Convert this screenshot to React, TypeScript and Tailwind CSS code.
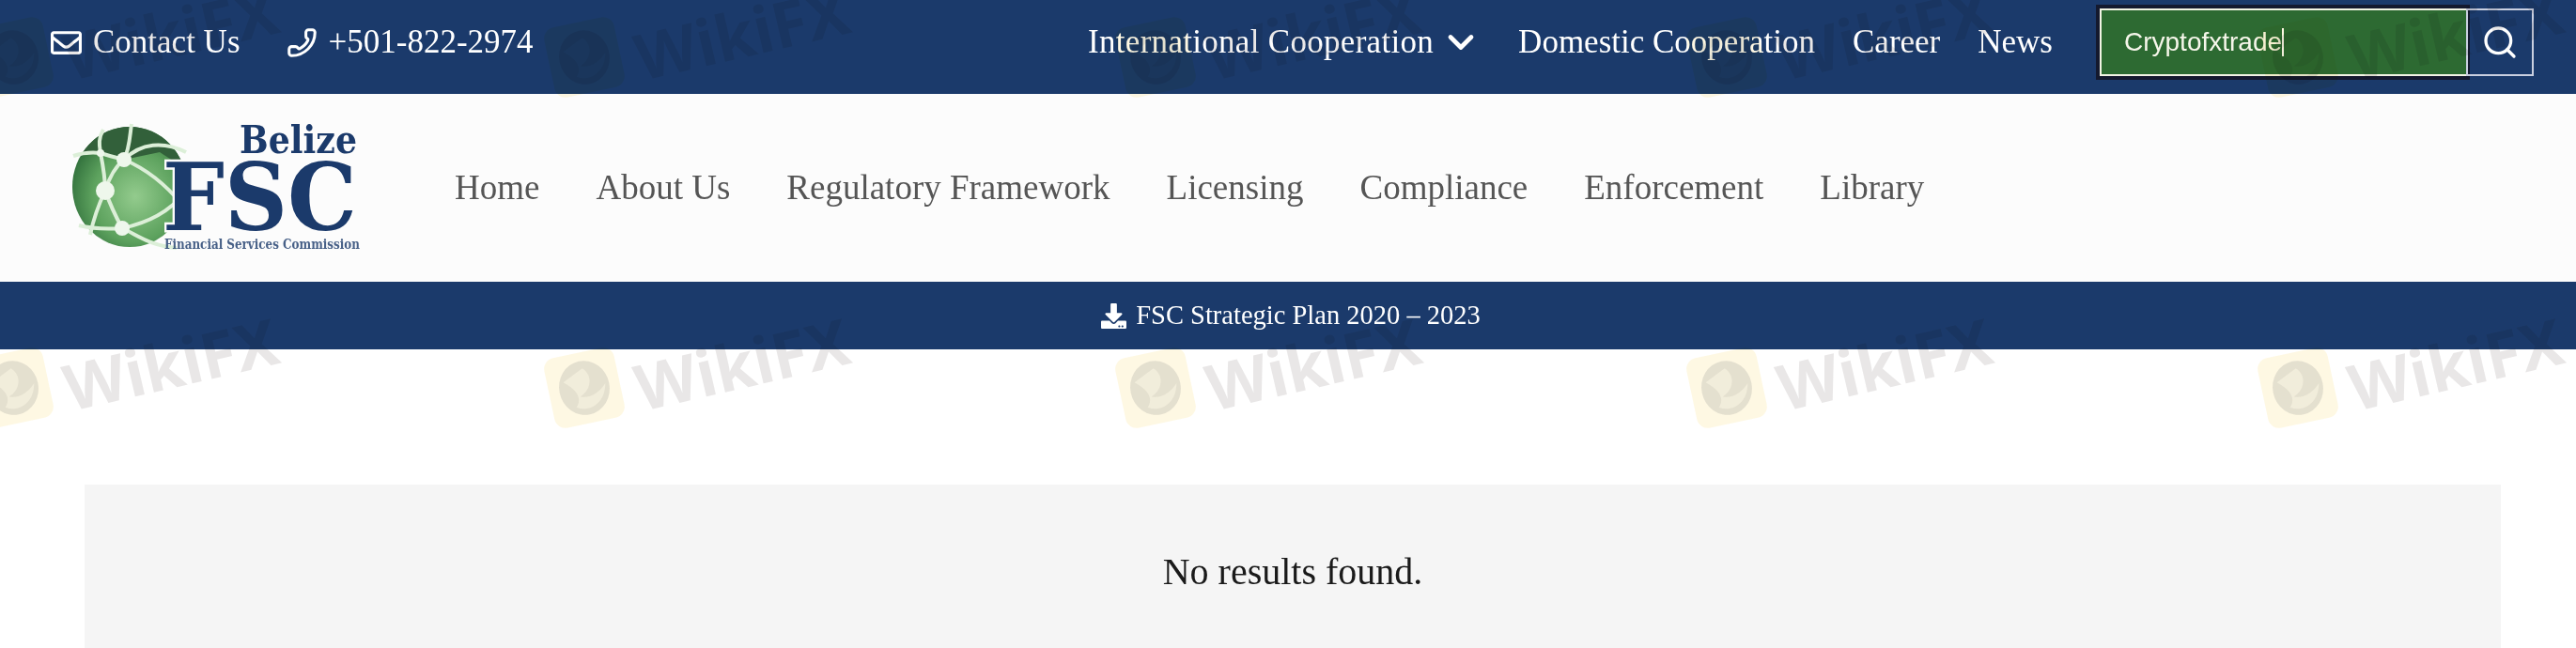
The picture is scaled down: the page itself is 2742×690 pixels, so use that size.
import { ChevronDown, Phone, Search } from "lucide-react";
import { FaDownload, FaRegEnvelope } from "react-icons/fa";

const mainNav = ["Home", "About Us", "Regulatory Framework", "Licensing", "Compliance", "Enforcement", "Library"];

const marks = [23, 375].flatMap((top) =>
  [-24, 584, 1192, 1800, 2408].map((left) => ({ top, left }))
);

const Logo = () => (
  <svg width="320" height="144" viewBox="0 0 320 144" className="block">
    <defs>
      <radialGradient id="globe" cx="0.55" cy="0.58" r="0.62">
        <stop offset="0" stopColor="#93cb8d" />
        <stop offset="0.6" stopColor="#5da25e" />
        <stop offset="1" stopColor="#2c6a38" />
      </radialGradient>
      <clipPath id="ball">
        <ellipse cx="68" cy="71" rx="61" ry="64" />
      </clipPath>
    </defs>
    <ellipse cx="68" cy="71" rx="61" ry="64" fill="url(#globe)" />
    <path d="M0 40 L37 35 L62 42 L100 34 L140 60 L140 0 L0 0 Z" fill="#32603a" clipPath="url(#ball)" />
    <g fill="none" stroke="#dcefd8" strokeWidth="4">
      <path d="M40 10 C34 20 36 28 37 35 C40 50 42 62 42 75 C48 92 54 104 60 115" />
      <path d="M70 4 C68 18 68 30 62 42 C52 50 46 62 42 75" />
      <path d="M8 38 C20 34 28 34 37 35 C46 38 54 40 62 42 C80 24 104 22 128 34" />
      <path d="M62 42 C86 52 106 68 124 90" />
      <path d="M42 75 C34 92 28 112 26 122" />
      <path d="M60 115 C84 110 108 100 126 78" />
      <path d="M14 112 C30 116 46 116 60 115 C76 122 90 134 118 136" />
    </g>
    <circle cx="62" cy="42" r="8" fill="#eef7ec" />
    <circle cx="37" cy="35" r="4" fill="#eef7ec" />
    <circle cx="42" cy="75" r="10" fill="#eef7ec" />
    <circle cx="60" cy="115" r="8" fill="#eef7ec" />
    <g fill="#1b3a6b" fontFamily="'DejaVu Serif', serif" fontWeight="700">
      <text x="185" y="35" fontSize="41" textLength="125" lengthAdjust="spacingAndGlyphs">Belize</text>
      <text
        x="103"
        y="117"
        fontSize="100"
        textLength="207"
        lengthAdjust="spacingAndGlyphs"
        stroke="#fcfcfc"
        strokeWidth="5"
        paintOrder="stroke"
      >
        FSC
      </text>
      <text x="105" y="137" fontSize="14" textLength="208" lengthAdjust="spacingAndGlyphs" opacity="0.8">
        Financial Services Commission
      </text>
    </g>
  </svg>
);

const Watermark = ({ top, left }: { top: number; left: number }) => (
  <div className="absolute flex items-start gap-[14px]" style={{ top, left }}>
    <div className="flex h-[76px] w-[76px] -rotate-[12deg] items-center justify-center rounded-xl bg-[#fdeeb8]/40">
      <svg width="58" height="62" viewBox="0 0 56 60">
        <ellipse cx="28" cy="30" rx="26" ry="28" fill="#8a8a8a" opacity="0.22" />
        <path d="M8 20 L30 10 C40 20 34 34 22 38 C32 42 42 38 50 30 C46 50 28 56 16 48 C24 40 20 30 8 20 Z" fill="#fdf8e6" opacity="0.55" />
      </svg>
    </div>
    <span className="-mt-[22px] -rotate-[13deg] font-['Noto_Sans',sans-serif] text-[68px] leading-none font-bold text-[#6b6060]/15">
      WikiFX
    </span>
  </div>
);

export default function App() {
  return (
    <div className="relative h-[690px] overflow-hidden bg-white font-['Liberation_Serif',serif]">
      {/* top bar */}
      <div className="flex h-[100px] items-center justify-between bg-[#1b3a6b] pr-[45px] pb-[10px] pl-[54px] text-[35px] text-white">
        <div className="flex items-center">
          <FaRegEnvelope size={33} className="mr-[12px]" />
          <span>Contact Us</span>
          <Phone size={33} strokeWidth={2.2} className="mr-[12px] ml-[49px] -scale-x-100" />
          <span>+501-822-2974</span>
        </div>
        <div className="flex items-center">
          <span className="tracking-[0.3px]">International Cooperation</span>
          <ChevronDown size={44} strokeWidth={2.6} className="mr-[39px] ml-[7px]" />
          <span>Domestic Cooperation</span>
          <span className="ml-[40px]">Career</span>
          <span className="ml-[40px]">News</span>
          <div className="ml-[46px] flex items-center">
            <div className="flex h-[80px] w-[398px] items-center bg-[#14192e] pl-[4px]">
              <div className="flex h-[72px] w-[392px] items-center border-2 border-[#f1f3e3] bg-[#2d6a32] pl-[24px] font-['Liberation_Sans',sans-serif] text-[28px] text-[#f6f6ea]">
                <span>Cryptofxtrade</span>
                <span className="h-[30px] w-[2px] bg-white" />
              </div>
            </div>
            <button className="-ml-[4px] flex h-[72px] w-[72px] items-center justify-center border-2 border-[#c9cfe0]">
              <Search size={40} strokeWidth={2} />
            </button>
          </div>
        </div>
      </div>

      {/* logo and main menu */}
      <div className="flex h-[200px] items-center bg-[#fcfcfc] pl-[70px] text-[37px] text-[#555555]">
        <Logo />
        <nav className="ml-[94px] flex items-center gap-[60px]">
          {mainNav.map((item) => (
            <span key={item}>{item}</span>
          ))}
        </nav>
      </div>

      {/* strategic plan band */}
      <div className="flex h-[72px] items-center justify-center bg-[#1b3a6b] pl-[6px] text-[28.5px] text-white">
        <FaDownload size={27} className="mr-[10px]" />
        <span>FSC Strategic Plan 2020 – 2023</span>
      </div>

      <div className="mt-[144px] mr-[80px] ml-[90px] flex h-[174px] justify-center bg-[#f5f5f5] pt-[73px] text-[40px] leading-none text-[#1a1a1a]">
        No results found.
      </div>

      <div className="pointer-events-none absolute inset-0 mix-blend-multiply">
        {marks.map((m) => (
          <Watermark key={`${m.top}-${m.left}`} top={m.top} left={m.left} />
        ))}
      </div>
    </div>
  );
}
